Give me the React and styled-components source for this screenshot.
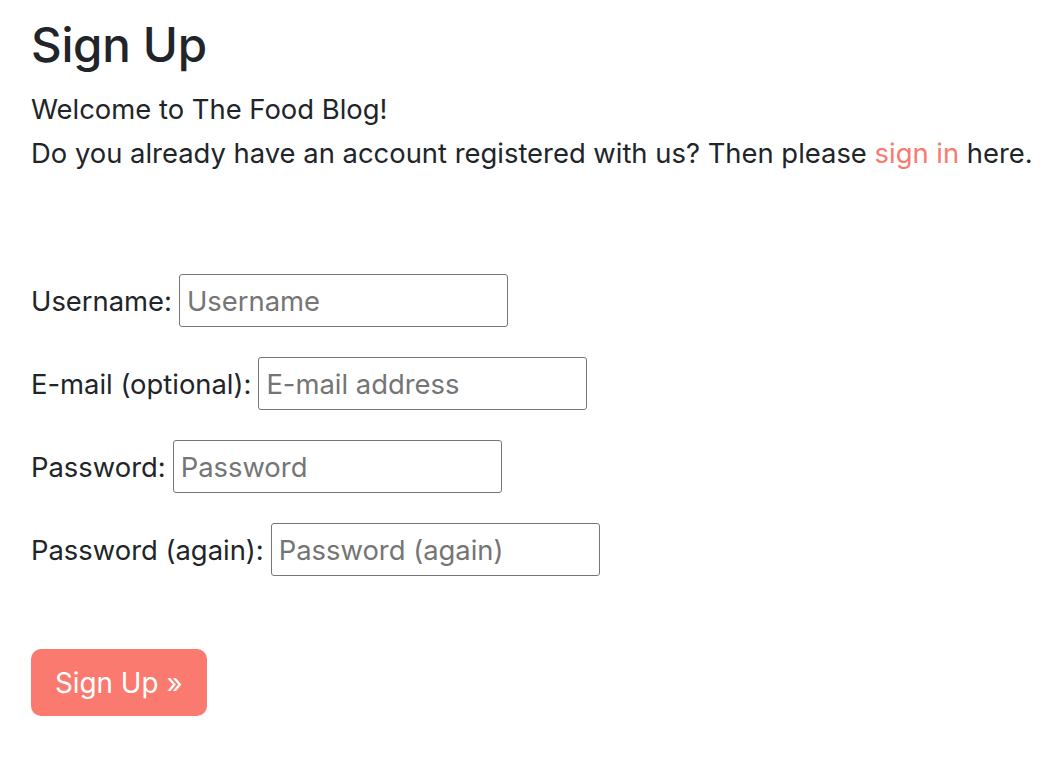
import React from "react";
import styled, { createGlobalStyle } from "styled-components";

const Global = createGlobalStyle`
  html, body { margin: 0; padding: 0; background: #fff; }
  body {
    font-family: Inter, "Noto Sans", sans-serif;
    color: #212529;
    font-size: 27.4px;
    line-height: 44px;
  }
`;

const Page = styled.main`
  padding: 14px 31px 40px;
`;

const Title = styled.h1`
  margin: 0 0 11px;
  font-size: 47.5px;
  font-weight: 500;
  line-height: 62px;
  letter-spacing: -0.3px;
`;

const Intro = styled.p`
  margin: 0;
`;

const Link = styled.a`
  color: #fa7a70;
  text-decoration: none;
`;

const Form = styled.form`
  display: flex;
  flex-direction: column;
  gap: 30px;
  margin-top: 99px;
`;

const Row = styled.div`
  display: flex;
  align-items: center;
  gap: 7px;
`;

const Label = styled.label`
  white-space: nowrap;
`;

const Input = styled.input`
  box-sizing: border-box;
  width: 329px;
  height: 53px;
  padding: 0 7px;
  border: 1px solid #767676;
  border-radius: 3px;
  font-family: inherit;
  font-size: 27.4px;
  color: #212529;
  &::placeholder { color: #757575; }
`;

const Submit = styled.button`
  align-self: flex-start;
  margin-top: 43px;
  height: 67px;
  padding: 0 24px;
  border: none;
  border-radius: 10px;
  background: #fa7a70;
  color: #fff;
  font-family: inherit;
  font-size: 27.8px;
  cursor: pointer;
`;

export default function App() {
  return (
    <>
      <Global />
      <Page>
        <Title>Sign Up</Title>
        <Intro>Welcome to The Food Blog!</Intro>
        <Intro>
          Do you already have an account registered with us? Then please{" "}
          <Link href="#">sign in</Link> here.
        </Intro>
        <Form onSubmit={(e) => e.preventDefault()}>
          <Row>
            <Label htmlFor="u">Username:</Label>
            <Input id="u" placeholder="Username" />
          </Row>
          <Row>
            <Label htmlFor="e">E-mail (optional):</Label>
            <Input id="e" placeholder="E-mail address" />
          </Row>
          <Row>
            <Label htmlFor="p1">Password:</Label>
            <Input id="p1" type="password" placeholder="Password" />
          </Row>
          <Row>
            <Label htmlFor="p2">Password (again):</Label>
            <Input id="p2" type="password" placeholder="Password (again)" />
          </Row>
          <Submit type="submit">Sign Up »</Submit>
        </Form>
      </Page>
    </>
  );
}
